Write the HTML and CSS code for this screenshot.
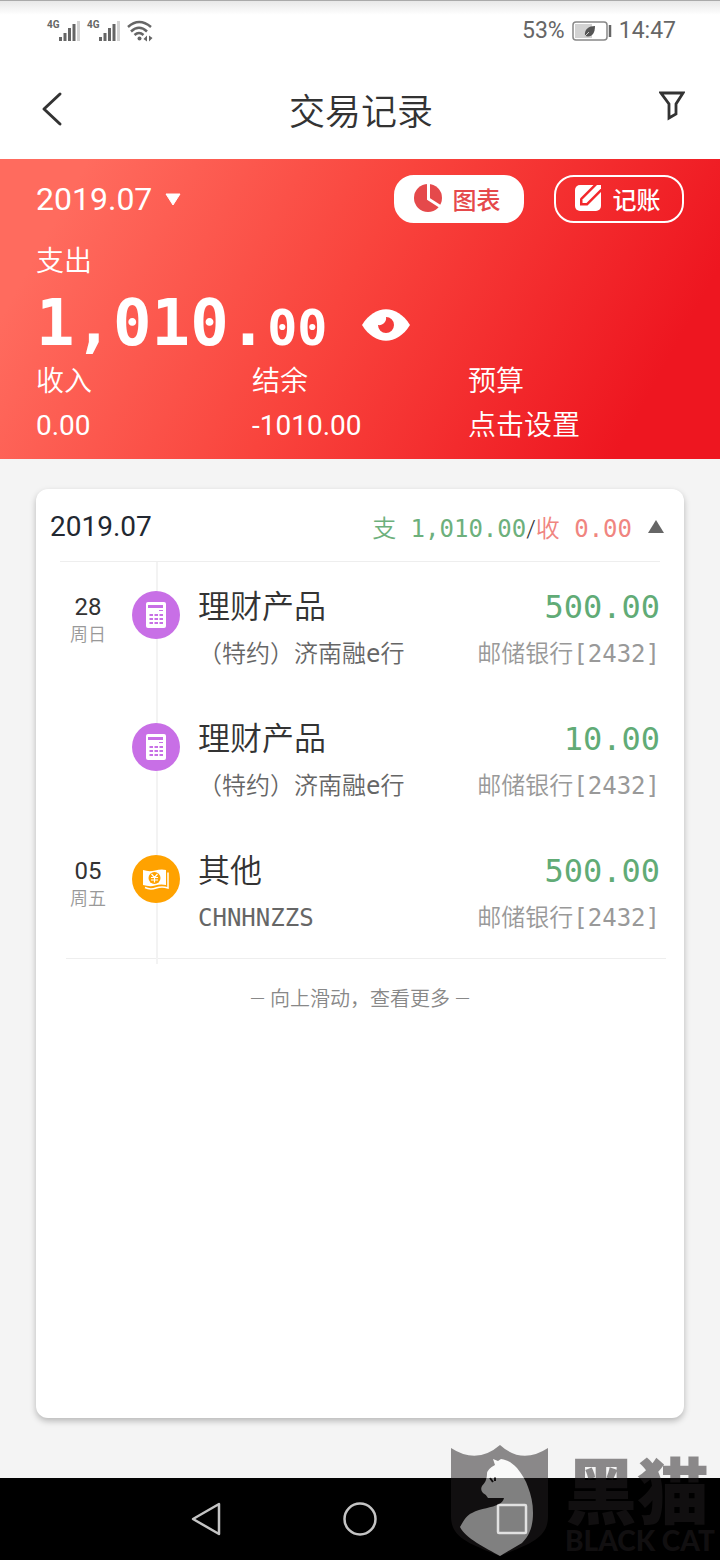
FILE: index.html
```html
<!DOCTYPE html>
<html lang="zh-CN">
<head>
  <meta charset="utf-8">
  <meta name="viewport" content="width=device-width, initial-scale=1">
  <title>交易记录</title>
  <link rel="stylesheet" href="styles.css">
</head>
<body>
  <div class="status-bar">
    <div class="signals">
      <div class="sim">
        <span>4G</span>
        <svg width="22" height="22" viewBox="0 0 22 22" aria-hidden="true"><path d="M1.500 17V21M6 13V21M10.500 8V21M15 4V21" stroke="#666" stroke-width="3"/><path d="M19.500 1V21" stroke="#d4d4d4" stroke-width="3"/></svg>
      </div>
      <div class="sim">
        <span>4G</span>
        <svg width="22" height="22" viewBox="0 0 22 22" aria-hidden="true"><path d="M1.500 17V21M6 13V21M10.500 8V21M15 4V21" stroke="#666" stroke-width="3"/><path d="M19.500 1V21" stroke="#d4d4d4" stroke-width="3"/></svg>
      </div>
      <svg width="26" height="22" viewBox="0 0 26 22" aria-hidden="true">
        <path d="M1 7Q12-3 24 7M4 11.500Q12 4 20 11.500M7.500 15Q12 11 16.500 15" fill="none" stroke="#666" stroke-width="2.500"/>
        <circle cx="12.500" cy="18.500" r="2" fill="#666"/>
        <path d="M20 15.500V21.500L16.500 19ZM22 15.500V21.500L25.500 18Z" fill="#666"/>
      </svg>
    </div>
    <div class="battery">
      <span>53%</span>
      <svg width="40" height="20" viewBox="0 0 40 20" aria-hidden="true">
        <rect x="1" y="1" width="34" height="18" rx="3" fill="#fff" stroke="#888" stroke-width="1.500"/>
        <rect x="3" y="3" width="17" height="14" fill="#d2d2d2"/>
        <path d="M13 15C12 8 17 5 23 5C23 12 20 17 13 15Z" fill="#555"/>
        <path d="M12 16L17 11" stroke="#ccc" stroke-width="1"/>
        <path d="M38 4V16" stroke="#666" stroke-width="2.500"/>
      </svg>
      <span>14:47</span>
    </div>
  </div>

  <header class="header">
    <button class="icon-button" type="button" aria-label="返回">
      <svg width="24" height="36" viewBox="0 0 24 36"><path d="M21 3L5 18L21 33" fill="none" stroke="#333" stroke-width="3" stroke-linecap="round" stroke-linejoin="round"/></svg>
    </button>
    <h1>交易记录</h1>
    <button class="icon-button" type="button" aria-label="筛选">
      <svg width="26" height="36" viewBox="0 0 26 36"><path d="M2 2H24L17 13V23L10 27V13Z" fill="none" stroke="#333" stroke-width="2.800"/></svg>
    </button>
  </header>

  <section class="summary">
    <div class="toolbar">
      <button class="month" type="button">2019.07
        <svg width="16" height="13" viewBox="0 0 16 13" aria-hidden="true"><path d="M1 1H15L8 12Z" fill="#fff" stroke="#fff" stroke-linejoin="round"/></svg>
      </button>
      <div class="actions">
        <button class="pill pill-solid" type="button">
          <svg width="28" height="28" viewBox="0 0 28 28" aria-hidden="true">
            <circle cx="14" cy="14" r="14" fill="#e5494b"/>
            <path d="M14.500 0V15L27 23" fill="none" stroke="#fff" stroke-width="3"/>
          </svg>
          图表
        </button>
        <button class="pill pill-outline" type="button">
          <svg width="28" height="28" viewBox="0 0 28 28" aria-hidden="true">
            <rect x="1" y="1" width="26" height="26" rx="5" fill="#fff"/>
            <path d="M6 14.500L20.500 0H28V7L13.500 21.500H6Z" fill="#f3282c"/>
            <path d="M8.500 15.500L23 1H27V4.500L12.500 19H8.500Z" fill="#fff"/>
          </svg>
          记账
        </button>
      </div>
    </div>
    <p class="label">支出</p>
    <div class="total">
      <p class="amount">1,010.<small>00</small></p>
      <button class="icon-button" type="button" aria-label="隐藏金额">
        <svg width="48" height="34" viewBox="0 0 48 34">
          <path d="M0 17C13-4 35-4 48 17C35 38 13 38 0 17Z" fill="#fff"/>
          <path d="M24 9A8 8 0 1 1 16 17C20 18 25 14 24 9Z" fill="#f43b39"/>
        </svg>
      </button>
    </div>
    <dl class="stats">
      <div><dt>收入</dt><dd>0.00</dd></div>
      <div><dt>结余</dt><dd>-1010.00</dd></div>
      <div><dt>预算</dt><dd><button type="button">点击设置</button></dd></div>
    </dl>
  </section>

  <main class="content">
    <section class="card">
      <div class="card-head">
        <h2>2019.07</h2>
        <button class="card-totals" type="button">
          <span><span class="out">支 1,010.00</span><span class="slash">/</span><span class="in">收 0.00</span></span>
          <svg width="16" height="13" viewBox="0 0 16 13" aria-hidden="true"><path d="M8 0L16 13H0Z" fill="#666"/></svg>
        </button>
      </div>
      <ul class="records">
        <li class="record">
          <div class="day"><b>28</b><span>周日</span></div>
          <div class="timeline">
            <span class="badge purple">
              <svg width="20" height="26" viewBox="0 0 20 26" aria-hidden="true">
                <rect width="20" height="26" rx="2" fill="#fff"/>
                <path d="M2 3H17V6H2Z" fill="#c86fe6"/><path d="M13 8.500H17" stroke="#c86fe6"/>
                <path d="M3.500 13H17M3.500 17H17M3.500 21H17" stroke="#c86fe6" stroke-width="2" stroke-dasharray="3.500 1.500"/>
              </svg>
            </span>
          </div>
          <div class="what"><h3>理财产品</h3><p>（特约）济南融e行</p></div>
          <div class="money"><strong>500.00</strong><p>邮储银行[2432]</p></div>
        </li>
        <li class="record">
          <div class="day"></div>
          <div class="timeline">
            <span class="badge purple">
              <svg width="20" height="26" viewBox="0 0 20 26" aria-hidden="true">
                <rect width="20" height="26" rx="2" fill="#fff"/>
                <path d="M2 3H17V6H2Z" fill="#c86fe6"/><path d="M13 8.500H17" stroke="#c86fe6"/>
                <path d="M3.500 13H17M3.500 17H17M3.500 21H17" stroke="#c86fe6" stroke-width="2" stroke-dasharray="3.500 1.500"/>
              </svg>
            </span>
          </div>
          <div class="what"><h3>理财产品</h3><p>（特约）济南融e行</p></div>
          <div class="money"><strong>10.00</strong><p>邮储银行[2432]</p></div>
        </li>
        <li class="record">
          <div class="day"><b>05</b><span>周五</span></div>
          <div class="timeline">
            <span class="badge orange">
              <svg width="28" height="22" viewBox="0 0 28 22" aria-hidden="true">
                <path d="M1 2Q7 4 13 2.500T24 2V17Q18 16 13 17.500T1 17Z" fill="#fff"/>
                <path d="M26 4.500V20Q20 18 14 20T3 19.500" fill="none" stroke="#fff" stroke-width="1.500"/>
                <circle cx="12.500" cy="10" r="6" fill="#ffa200"/>
                <path d="M9.500 6L12.500 9.500L15.500 6M12.500 9.500V14.500M9 9.500H16M9 12H16" fill="none" stroke="#fff" stroke-width="1.200"/>
              </svg>
            </span>
          </div>
          <div class="what"><h3>其他</h3><p>CHNHNZZS</p></div>
          <div class="money"><strong>500.00</strong><p>邮储银行[2432]</p></div>
        </li>
      </ul>
      <p class="more">— 向上滑动，查看更多 —</p>
    </section>
  </main>

  <nav class="nav-bar">
    <button type="button" aria-label="后退"><svg width="36" height="36" viewBox="0 0 36 36"><path d="M29 3V33L3 18Z"/></svg></button>
    <button type="button" aria-label="主页"><svg width="36" height="36" viewBox="0 0 36 36"><circle cx="18" cy="18" r="15.500"/></svg></button>
    <button type="button" aria-label="最近任务"><svg width="36" height="36" viewBox="0 0 36 36"><rect x="4" y="4" width="28" height="28" rx="1"/></svg></button>
  </nav>

  <div class="watermark">
    <svg width="98" height="112" viewBox="0 0 98 112" aria-hidden="true">
      <path fill="#231f20" d="M0 3Q26 20 49 0Q71 20 97 3V71C97 92 82 98 49 111C16 98 0 92 0 71Z"/>
      <path fill="#fff" d="M42 14L47 16L50 14C57 15 61 18 66 23C71 29 75 36 77 42C80 50 82 58 82 68C82 82 78 91 71 98L49 111C35 103 14 93 9 82C13 75 16 70 21 68C30 63 41 63 48 59Q52 57 53 53H37Q36 50 32 48Q29 45 31 41Q36 36 36 29Q36 24 44 20Z"/>
      <path stroke="#231f20" stroke-width="2" d="M39 33L42 37M44 32V36"/>
    </svg>
    <div class="brand">
      <span class="brand-name">黑猫</span>
      <span class="brand-latin">BLACK CAT</span>
    </div>
  </div>
</body>
</html>
```
FILE: styles.css
```css
* {
  box-sizing: border-box;
}

body {
  position: relative;
  display: flex;
  flex-direction: column;
  min-height: 100vh;
  margin: 0;
  overflow-x: hidden;
  background: #f4f4f4;
  color: #333;
  font-family: Roboto, "Noto Sans CJK SC", sans-serif;
  font-size: 28px;
}

h1, h2, h3, p, ul, dl, dd {
  margin: 0;
  padding: 0;
  font-weight: 400;
}

ul {
  list-style: none;
}

button {
  padding: 0;
  border: 0;
  background: none;
  color: inherit;
  font: inherit;
  cursor: pointer;
}

svg {
  display: block;
  flex: none;
}

.status-bar {
  display: flex;
  justify-content: space-between;
  align-items: center;
  height: 60px;
  padding: 0 44px 0 47px;
  border-top: 1px solid #aaa;
  background: linear-gradient(#e8e8e8, #fff 14px);
  color: #666;
  font-size: 23px;
}

.signals, .sim {
  display: flex;
}

.signals {
  gap: 6px;
}

.sim {
  width: 34px;
  justify-content: space-between;
}

.sim span {
  width: 12px;
  font-size: 10px;
  font-weight: 700;
  line-height: 10px;
}

.battery {
  display: flex;
  align-items: center;
  gap: 7px;
}

.header {
  display: flex;
  justify-content: space-between;
  align-items: center;
  height: 99px;
  padding: 0 35px 2px 39px;
  background: #fff;
}

.header h1 {
  font-size: 36px;
  font-weight: 350;
}

.summary {
  height: 300px;
  padding: 16px 36px 0;
  background: linear-gradient(119deg, #ff6b5e 10%, #f9443d 47%, #ee1620 88%);
  color: #fff;
}

.toolbar, .actions, .pill, .month, .total {
  display: flex;
  align-items: center;
}

.toolbar {
  justify-content: space-between;
  height: 48px;
}

.month {
  gap: 13px;
  font-size: 32px;
}

.actions {
  gap: 30px;
}

.pill {
  justify-content: center;
  gap: 11px;
  width: 130px;
  height: 48px;
  padding: 0 4px 2px 0;
  border: 2px solid #fff;
  border-radius: 20px;
  font-size: 24px;
  font-weight: 500;
}

.pill-solid {
  background: #fff;
  color: #e5494b;
}

.label {
  margin-top: 19px;
  line-height: 40px;
  font-weight: 350;
}

.total {
  gap: 35px;
  height: 82px;
  padding-top: 4px;
}

.amount {
  font-family: "DejaVu Sans Mono", monospace;
  font-size: 64px;
  font-weight: 700;
  line-height: 78px;
}

.amount small {
  font-size: 50px;
}

.stats {
  display: grid;
  grid-template-columns: repeat(3, 1fr);
  line-height: 46px;
}

.stats dt {
  line-height: 36px;
  font-weight: 350;
}

.stats dd {
  margin-top: 3px;
}

.stats button {
  font-weight: 350;
}

.content {
  display: flex;
  flex: 1;
  padding: 30px 36px 60px;
}

.card {
  flex: 1;
  border-radius: 12px;
  background: #fff;
  box-shadow: 0 3px 6px rgba(0, 0, 0, .25);
}

.card-head {
  display: flex;
  justify-content: space-between;
  align-items: center;
  height: 72px;
  padding: 2px 20px 0 14px;
}

.card-head h2 {
  color: #222831;
  font-size: 28px;
}

.card-totals {
  display: flex;
  align-items: center;
  gap: 16px;
  font-family: "DejaVu Sans Mono", "Noto Sans CJK SC", monospace;
  font-size: 24px;
  font-weight: 350;
}

.out {
  color: #6db07c;
}

.in {
  color: #f08580;
}

.slash {
  font-family: Roboto, sans-serif;
}

.records {
  margin: 0 24px;
  border-top: 1px solid #eee;
}

.record {
  display: flex;
  height: 132px;
  padding-top: 25px;
}

.day {
  width: 56px;
  margin-right: 16px;
  padding-top: 5px;
  text-align: center;
}

.day b, .day span {
  display: block;
}

.day b {
  font-size: 24px;
  font-weight: 400;
  line-height: 30px;
}

.day span {
  color: #999;
  font-size: 18px;
  font-weight: 350;
  line-height: 26px;
}

.timeline {
  display: flex;
  width: 48px;
  height: 132px;
  margin-top: -25px;
  padding-top: 29px;
  background: linear-gradient(#f3f3f3, #f3f3f3) 24px 0 / 2px 100% no-repeat;
}

.record:last-child .timeline {
  height: 138px;
}

.badge {
  display: flex;
  justify-content: center;
  align-items: center;
  width: 48px;
  height: 48px;
  border-radius: 50%;
}

.purple {
  background: #c86fe6;
}

.orange {
  background: #ffa200;
}

.what {
  flex: 1;
  margin-left: 18px;
}

.what h3 {
  font-size: 32px;
  font-weight: 350;
  line-height: 40px;
}

.what p, .money p {
  margin-top: 11px;
  font-family: "DejaVu Sans Mono", "Noto Sans CJK SC", monospace;
  font-size: 24px;
  font-weight: 350;
  line-height: 32px;
  white-space: nowrap;
}

.what p {
  color: #666;
}

.money {
  color: #999;
  text-align: right;
}

.money strong {
  display: block;
  color: #61ab76;
  font-family: "DejaVu Sans Mono", monospace;
  font-size: 32px;
  font-weight: 400;
  line-height: 40px;
}

.more {
  margin: 0 18px 0 30px;
  padding: 24px 12px 0 0;
  border-top: 1px solid #eee;
  color: #888;
  font-size: 20px;
  font-weight: 350;
  line-height: 32px;
  text-align: center;
}

.nav-bar {
  display: flex;
  justify-content: center;
  align-items: center;
  gap: 116px;
  height: 82px;
  background: #000;
}

.nav-bar svg {
  fill: none;
  stroke: #c4c4c4;
  stroke-width: 2.5;
  stroke-linejoin: round;
}

/* sits over the corner of the page and the nav bar */
.watermark {
  position: absolute;
  right: 0;
  bottom: 3px;
  display: flex;
  gap: 16px;
  opacity: .5;
  pointer-events: none;
}

.brand {
  display: flex;
  flex-direction: column;
  width: 155px;
  padding-top: 6px;
  color: #231f20;
}

.brand-name {
  font-family: "Noto Sans CJK SC", sans-serif;
  font-size: 72px;
  font-weight: 900;
  line-height: 72px;
}

.brand-latin {
  font-family: Lato, sans-serif;
  font-size: 28px;
  font-weight: 900;
  line-height: 34px;
  white-space: nowrap;
}
```
